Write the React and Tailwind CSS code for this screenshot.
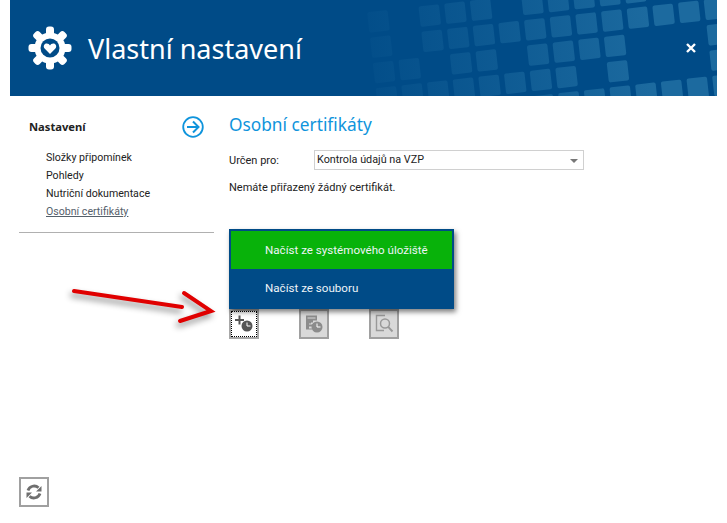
import React from "react";

const bodyFont = "font-['Roboto','Liberation_Sans',sans-serif]";
const headFont = "font-['Noto_Sans','Open_Sans',sans-serif]";

// header decoration: [row, [cols]] of a tilted tile grid
const TILE_ROWS = [
  [-1, [-2, 0, 1, 2, 4, 5, 6, 7, 8]],
  [0, [-2, 0, 1, 2, 3, 4, 5, 6, 7, 8, 9, 10, 11]],
  [1, [-2, -1, 1, 2, 4, 5, 6, 7, 11]],
  [2, [-2, -1, 0, 1, 2, 3, 4, 5, 7, 11]],
  [3, [4, 5, 6, 7, 8, 9, 10, 11]],
];

function HeaderTiles() {
  const tiles = [];
  TILE_ROWS.forEach(([row, cols]) => {
    cols.forEach((col) => {
      tiles.push({
        key: `${row}-${col}`,
        x: 364 + (205 + 77 * col + 8.5 * row) / 3 - 10,
        y: (122 - 8.7 * col + 76 * row) / 3,
      });
    });
  });
  return (
    <svg className="absolute inset-0 h-full w-full" viewBox="0 0 707 96">
      <defs>
        <linearGradient id="tileFade" gradientUnits="userSpaceOnUse" x1="340" y1="0" x2="640" y2="0">
          <stop offset="0" stopColor="#1c6a9f" stopOpacity="0.05" />
          <stop offset="0.4" stopColor="#1c6a9f" stopOpacity="0.4" />
          <stop offset="1" stopColor="#1c6a9f" stopOpacity="1" />
        </linearGradient>
      </defs>
      {tiles.map((t) => (
        <rect
          key={t.key}
          x={t.x - 10}
          y={t.y - 10}
          width="20.5"
          height="20.5"
          rx="2"
          fill="url(#tileFade)"
          transform={`rotate(-6.4 ${t.x} ${t.y})`}
        />
      ))}
    </svg>
  );
}

function GearHeart() {
  const teeth = [0, 45, 90, 135, 180, 225, 270, 315];
  return (
    <svg width="44" height="44" viewBox="0 0 44 44">
      <circle cx="22" cy="22" r="15.5" fill="#fff" />
      {teeth.map((a) => (
        <rect key={a} x="18" y="0.5" width="8" height="10" rx="3" fill="#fff" transform={`rotate(${a} 22 22)`} />
      ))}
      <circle cx="22" cy="22" r="9.5" fill="#004b87" />
      <path
        d="M22 28 L16.6 22.6 C14.8 20.4 16.2 17.6 18.7 17.6 C20.2 17.6 21.4 18.4 22 19.6 C22.6 18.4 23.8 17.6 25.3 17.6 C27.8 17.6 29.2 20.4 27.4 22.6 Z"
        fill="#fff"
      />
    </svg>
  );
}

function ClockBadge({ cx, cy, r, color }) {
  return (
    <g>
      <circle cx={cx} cy={cy} r={r} fill={color} />
      <path d={`M${cx} ${cy - r + 2}V${cy}H${cx + r - 2}`} stroke="#fff" strokeWidth="1" fill="none" />
    </g>
  );
}

function IconAddClock() {
  return (
    <svg width="20" height="20" viewBox="0 0 20 20">
      <path d="M5.5 1.5v9M1 6h9" stroke="#555" strokeWidth="2" fill="none" />
      <ClockBadge cx={13} cy={12} r={5.5} color="#555" />
    </svg>
  );
}

function IconListClock() {
  return (
    <svg width="20" height="20" viewBox="0 0 20 20">
      <path d="M2 1.5h11v5H9v2H7v1H5v1H9v2H5v2h3v1H2Z" fill="#8c8c8c" />
      <path d="M3.5 4h8" stroke="#d9d9d9" strokeWidth="1" />
      <ClockBadge cx={13} cy={13} r={5.5} color="#8c8c8c" />
    </svg>
  );
}

function IconDocSearch() {
  return (
    <svg width="20" height="20" viewBox="0 0 20 20" fill="none" stroke="#999">
      <path d="M11 1.5H2.5v15H10" strokeWidth="1.4" />
      <circle cx="11" cy="9.5" r="4.5" strokeWidth="1.5" />
      <path d="M14.2 12.8l4.3 4.7" strokeWidth="1.9" />
    </svg>
  );
}

function IconRefresh() {
  return (
    <svg width="18" height="18" viewBox="0 0 18 18" fill="none">
      <path d="M3 7.5A6.4 6.4 0 0 1 13.5 4.8" stroke="#6f6f6f" strokeWidth="2.8" />
      <path d="M15 10.5A6.4 6.4 0 0 1 4.5 13.2" stroke="#6f6f6f" strokeWidth="2.8" />
      <path d="M16.5 3v5.5H11Z M1.5 15v-5.5H7Z" fill="#6f6f6f" />
    </svg>
  );
}

function ToolButton({ children, active }) {
  return (
    <button
      type="button"
      className={`flex h-[30px] w-[30px] items-center justify-center border-2 ${
        active ? "border-[#a8a8a8] bg-white" : "border-[#a0a0a0] bg-[#d9d9d9]"
      }`}
    >
      {children}
    </button>
  );
}

export default function App() {
  return (
    <div className={`relative flex h-[523px] w-[727px] flex-col overflow-hidden bg-white px-[10px] ${bodyFont} text-[11px] text-[#222]`}>
      <header className={`relative flex h-[96px] shrink-0 items-center overflow-hidden bg-[#004b87] pl-[18px] text-white ${headFont}`}>
        <HeaderTiles />
        <div className="relative flex items-center gap-[16px]">
          <GearHeart />
          <h1 className="text-[27px] leading-none font-normal">Vlastní nastavení</h1>
        </div>
        <svg className="absolute top-[43px] right-[21px]" width="10" height="10" viewBox="0 0 10 10">
          <path d="M1 1l8 8M9 1l-8 8" stroke="#fff" strokeWidth="2.4" />
        </svg>
      </header>

      <div className="flex flex-1">
        <aside className="ml-[9px] w-[195px] shrink-0 pt-[20px]">
          <div className="flex items-center justify-between pr-[10px] pl-[10px]">
            <span className={`text-[11.2px] font-bold ${headFont}`}>Nastavení</span>
            <svg width="22" height="22" viewBox="0 0 22 22" fill="none" stroke="#0f94dc">
              <circle cx="11" cy="11" r="9.8" strokeWidth="1.8" />
              <path d="M5 11h11M11 5.5l5.5 5.5-5.5 5.5" strokeWidth="2" />
            </svg>
          </div>
          <ul className="mt-[11px] flex flex-col pl-[27px] text-[10.6px] leading-[18px]">
            <li>Složky připomínek</li>
            <li>Pohledy</li>
            <li>Nutriční dokumentace</li>
            <li className="text-[#55606b] underline">Osobní certifikáty</li>
          </ul>
          <div className="mt-[11px] h-px bg-[#b0b0b0]" />
        </aside>

        <main className="ml-[15px] flex-1 pt-[16px]">
          <h2 className={`text-[17.3px] leading-[26px] font-normal text-[#0f94dc] ${headFont}`}>Osobní certifikáty</h2>
          <div className="mt-[12px] flex items-center">
            <span className="w-[85px] pt-[3px]">Určen pro:</span>
            <div className="flex h-[20px] w-[270px] items-center justify-between border border-[#d0d0d0] pt-[1px] pr-[5px] pl-[2px]">
              <span className="text-[10.8px]">Kontrola údajů na VZP</span>
              <span className="h-0 w-0 border-x-[4px] border-t-[4px] border-x-transparent border-t-[#777]" />
            </div>
          </div>
          <p className="mt-[9px] leading-[17px]">Nemáte přiřazený žádný certifikát.</p>
          <div className="relative mt-[113px] flex gap-[40px]">
            <ToolButton active>
              <span className="flex h-[26px] w-[26px] items-center justify-center border border-dotted border-black">
                <IconAddClock />
              </span>
            </ToolButton>
            <ToolButton>
              <IconListClock />
            </ToolButton>
            <ToolButton>
              <IconDocSearch />
            </ToolButton>
            <div className="absolute top-[-80px] left-0 w-[225px] border-2 border-[#004b87] bg-[#004b87] text-[11.6px] text-[#eef4f8] shadow-[2px_3px_5px_rgba(0,0,0,0.5)]">
              <div className="flex h-[38px] items-center bg-[#08b20a] pt-[1px] pl-[34px]">Načíst ze systémového úložiště</div>
              <div className="flex h-[38px] items-center pt-[1px] pl-[34px]">Načíst ze souboru</div>
            </div>
          </div>
        </main>
      </div>

      <div className="mb-[16px] ml-[9px] flex">
        <button type="button" className="flex h-[30px] w-[30px] items-center justify-center border-2 border-[#a0a0a0] bg-white">
          <IconRefresh />
        </button>
      </div>

      <svg
        className="absolute top-[280px] left-[60px] drop-shadow-[-2px_4px_3px_rgba(0,0,0,0.45)]"
        width="170"
        height="50"
        viewBox="0 0 170 50"
        fill="none"
        stroke="#e00000"
        strokeWidth="4"
        strokeLinecap="round"
        strokeLinejoin="miter"
      >
        <path d="M14 11L122 27" />
        <path d="M124 13L151 31L120 41" />
      </svg>
    </div>
  );
}
